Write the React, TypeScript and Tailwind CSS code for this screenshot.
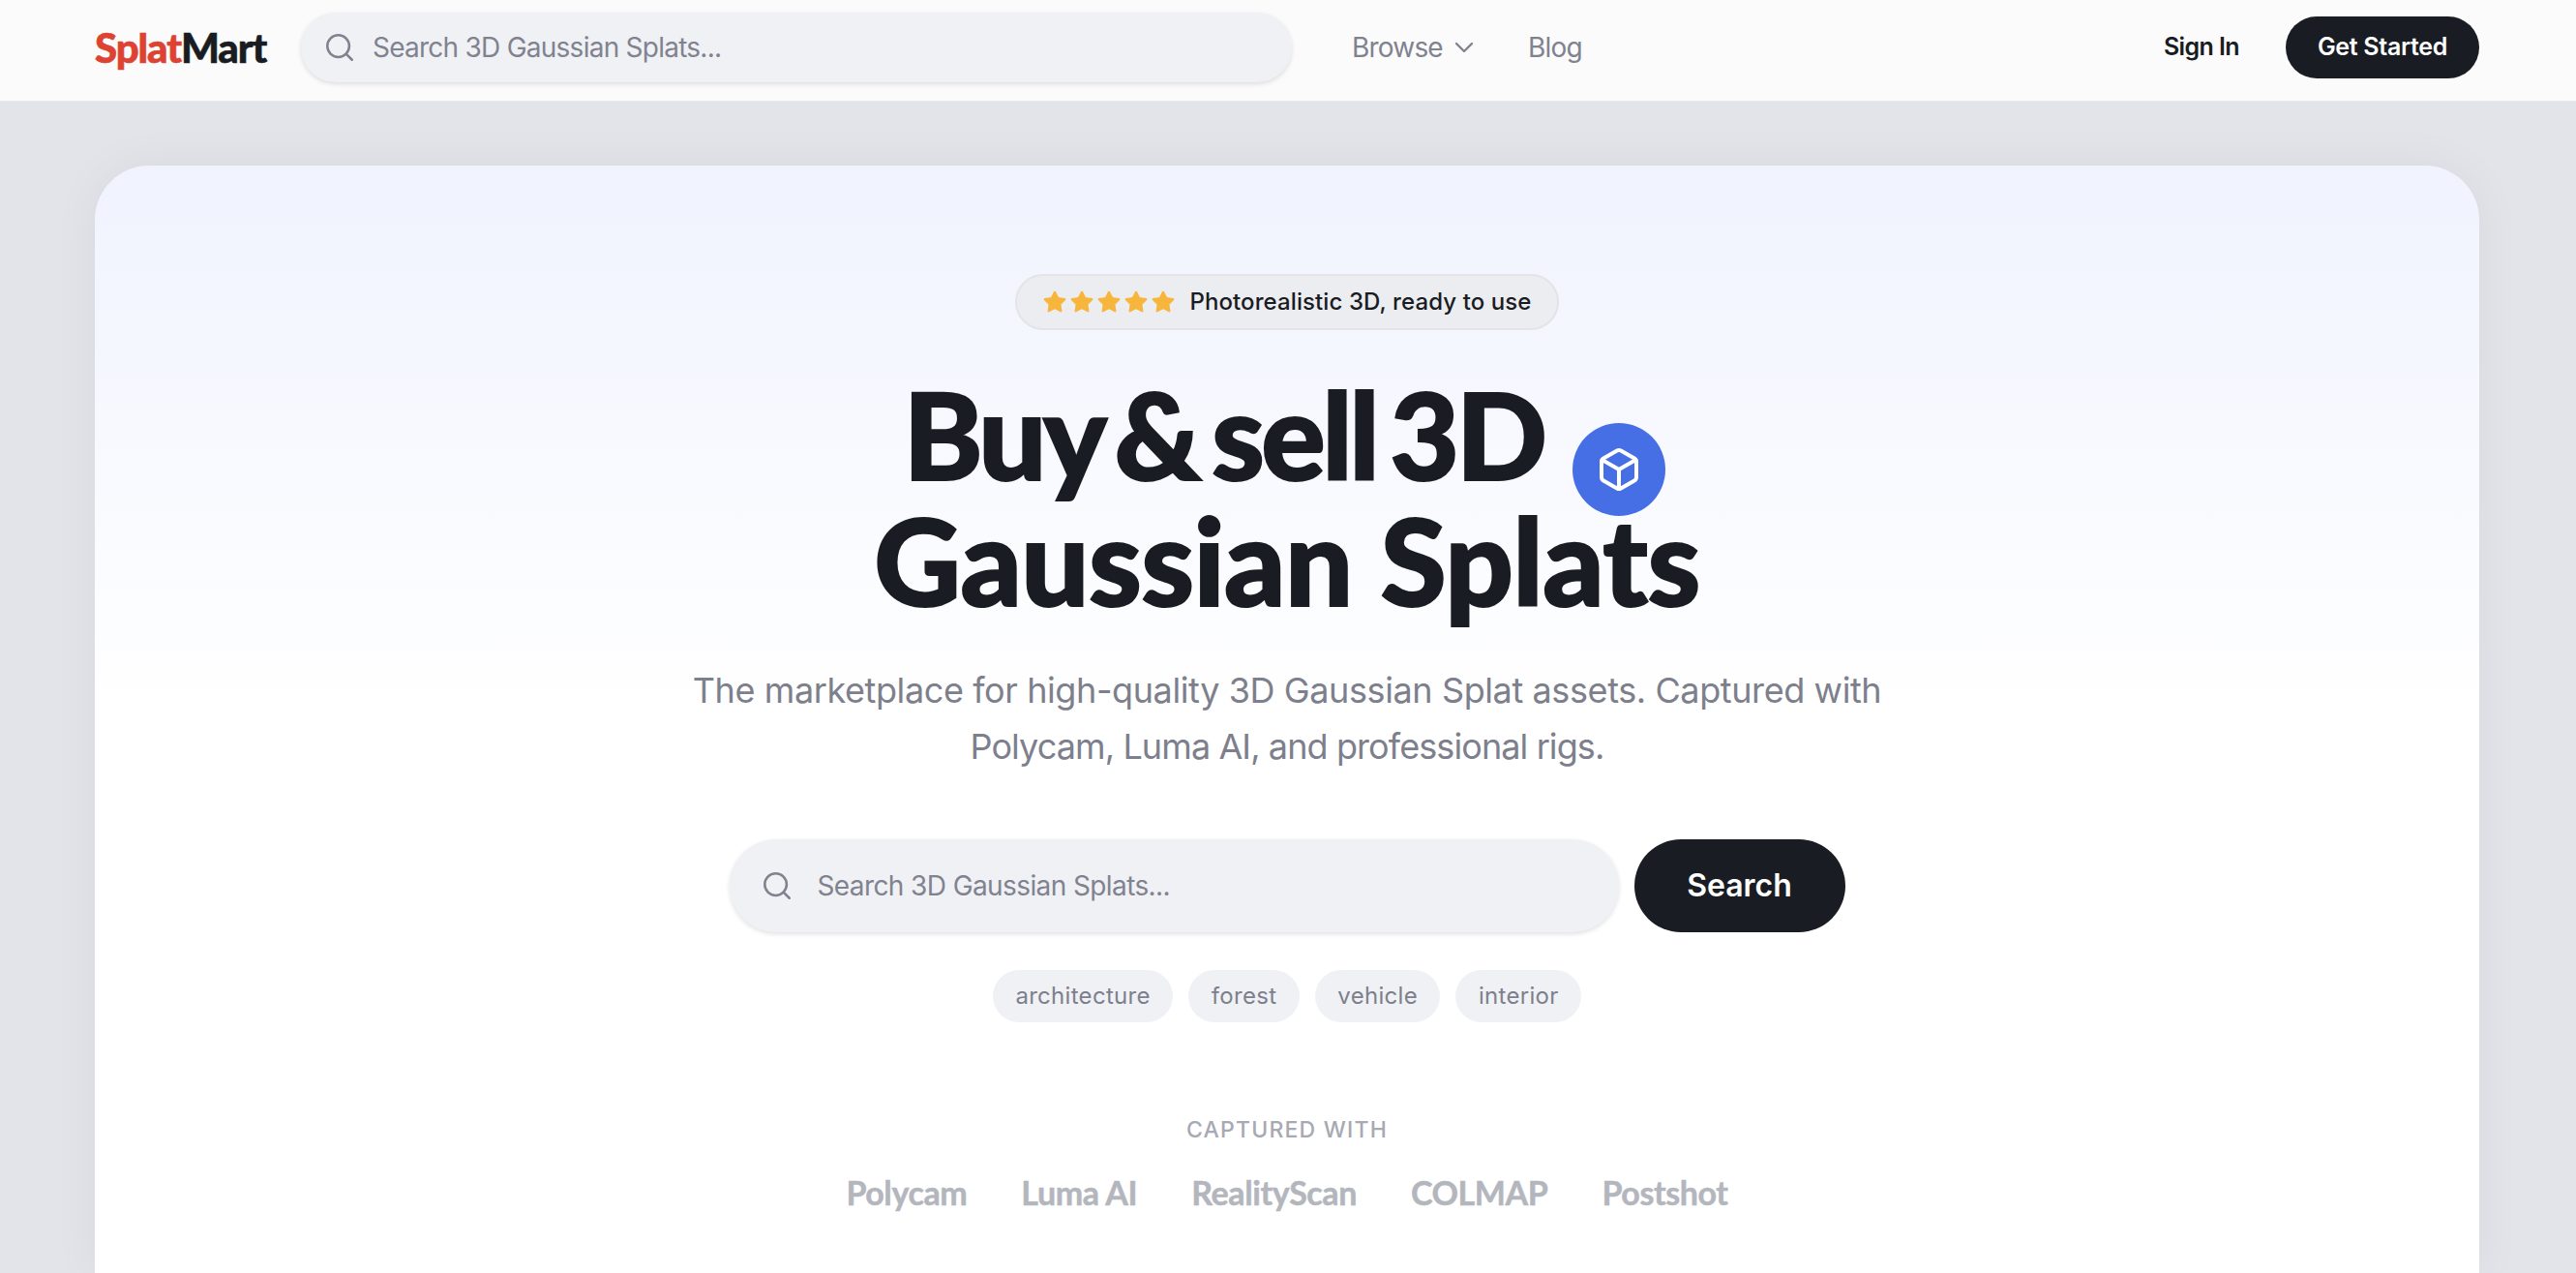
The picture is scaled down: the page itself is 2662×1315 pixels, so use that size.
import { ChevronDown, Search, Box, Star } from "lucide-react";

const chips = ["architecture", "forest", "vehicle", "interior"];
const tools = ["Polycam", "Luma AI", "RealityScan", "COLMAP", "Postshot"];

const App = () => {
  return (
    <div className="h-screen overflow-hidden flex flex-col bg-[#e3e4e9] font-['Inter','Noto_Sans',sans-serif] text-[#191c22]">
      <header className="h-[105px] shrink-0 flex items-center pl-[98px] pr-[100px] pb-[7px] bg-[#fbfbfb] border-b border-[#e6e7ea]">
        <a className="w-[213px] font-['Lato',sans-serif] font-black text-[42px] tracking-[-1.1px] leading-none [-webkit-text-stroke:0.6px_currentColor]">
          <span className="text-[#dc4332]">Splat</span>Mart
        </a>
        <div className="w-[1024px] h-[72px] rounded-full bg-[#f0f1f5] shadow-[0_2px_5px_rgba(0,0,0,0.12)] flex items-center pl-[23px] gap-[17px]">
          <Search size={34} strokeWidth={1.8} className="text-[#80838f] shrink-0" />
          <input placeholder="Search 3D Gaussian Splats..." className="w-full bg-transparent text-[28px] tracking-[-0.75px] focus:outline-0 placeholder:text-[#80838f]" />
        </div>
        <nav className="flex items-center ml-[62px] text-[28px] tracking-[-0.8px] text-[#80838f]">
          <span>Browse</span>
          <ChevronDown size={32} strokeWidth={1.8} className="ml-[6px]" />
          <span className="ml-[50px]">Blog</span>
        </nav>
        <div className="ml-auto flex items-center gap-[48px]">
          <a className="text-[25px] font-semibold tracking-[-0.6px]">Sign In</a>
          <button className="w-[200px] h-[64px] rounded-full bg-[#191c22] text-white text-[25px] font-semibold tracking-[-0.3px]">Get Started</button>
        </div>
      </header>

      <main className="flex-1 min-h-0 pl-[98px] pr-[100px] pt-[66px]">
        <section className="h-full rounded-t-[56px] bg-gradient-to-b from-[#f0f3fe] to-white to-[50%] bg-white shadow-[0_0_50px_rgba(0,0,0,0.05)] flex flex-col items-center pt-[112px]">
          <div className="w-[562px] h-[58px] rounded-full bg-[#ecedf1] border-2 border-[#e3e4e8] flex items-center justify-center gap-[14px]">
            <div className="flex gap-[2px]">
              {[0, 1, 2, 3, 4].map((i) => (
                <Star key={i} size={26} fill="#f7b53b" stroke="#f7b53b" strokeWidth={1} />
              ))}
            </div>
            <span className="text-[24px] font-medium tracking-[0.1px]">Photorealistic 3D, ready to use</span>
          </div>

          <h1 className="mt-[42px] font-['Lato',sans-serif] font-black text-[124px] leading-[130px] text-center [-webkit-text-stroke:2px_currentColor]">
            <span className="h-[130px] flex justify-center gap-[29px] pr-[6px] tracking-[-3.5px] [word-spacing:-12px]">
              <span>Buy &amp; sell 3D</span>
              <span className="mt-[54px] w-[96px] h-[96px] rounded-full bg-[#476fe5] flex items-center justify-center [-webkit-text-stroke:0]">
                <Box size={48} strokeWidth={2} className="text-white" />
              </span>
            </span>
            <span className="block tracking-[-0.6px]">Gaussian Splats</span>
          </h1>

          <p className="mt-[41px] text-[36px] leading-[58px] tracking-[-0.4px] text-[#7d808c] text-center">
            The marketplace for high-quality 3D Gaussian Splat assets. Captured with
            <br />
            <span className="tracking-[-0.9px]">Polycam, Luma AI, and professional rigs.</span>
          </p>

          <div className="mt-[67px] flex gap-[16px]">
            <div className="w-[919px] h-[96px] rounded-full bg-[#f0f1f5] shadow-[0_2px_5px_rgba(0,0,0,0.12)] flex items-center pl-[32px] gap-[25px]">
              <Search size={34} strokeWidth={1.8} className="text-[#80838f] shrink-0" />
              <input placeholder="Search 3D Gaussian Splats..." className="w-full bg-transparent text-[28px] tracking-[-0.6px] focus:outline-0 placeholder:text-[#80838f]" />
            </div>
            <button className="w-[218px] h-[96px] rounded-full bg-[#191c22] text-white text-[32px] font-semibold">Search</button>
          </div>

          <div className="mt-[39px] flex gap-[16px]">
            {chips.map((c) => (
              <span key={c} className="h-[54px] px-[23.5px] flex items-center rounded-full bg-[#f0f1f5] text-[24px] tracking-[0.3px] text-[#7d808c]">{c}</span>
            ))}
          </div>

          <div className="mt-[94px] text-[23px] font-medium tracking-[1.2px] text-[#a7a9b3]">CAPTURED WITH</div>
          <div className="mt-[21px] flex gap-[56px] font-['Lato',sans-serif] font-bold text-[34px] tracking-[-0.4px] text-[#b4b6be] [-webkit-text-stroke:0.5px_currentColor]">
            {tools.map((t) => (
              <span key={t}>{t}</span>
            ))}
          </div>
        </section>
      </main>
    </div>
  );
};

export default App;
